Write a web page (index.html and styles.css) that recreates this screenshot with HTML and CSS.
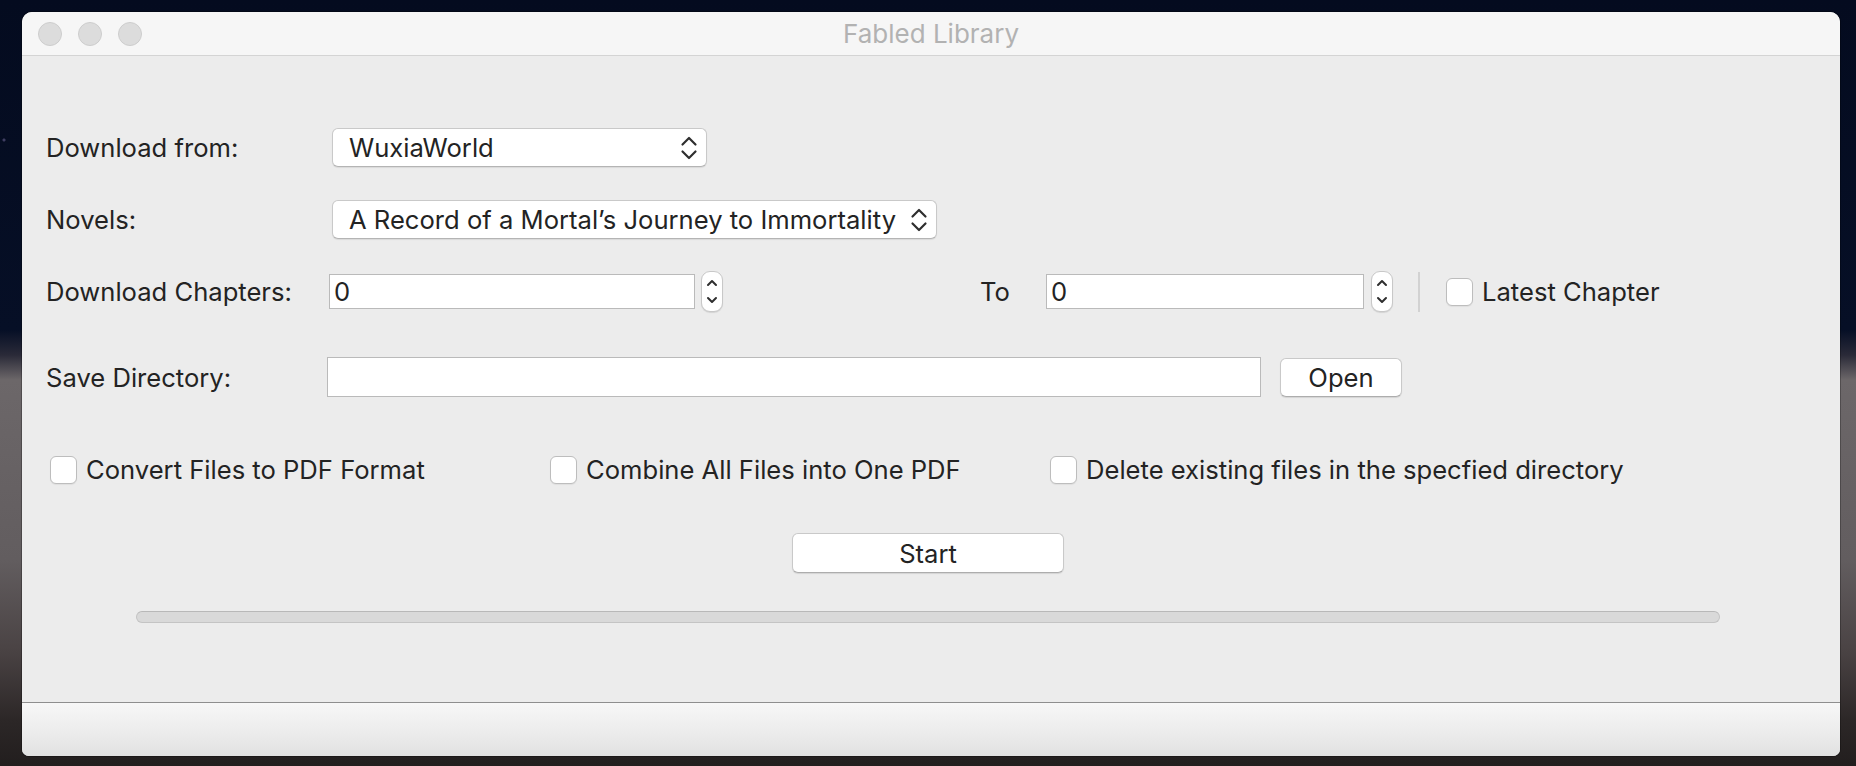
FILE: index.html
```html
<!DOCTYPE html>
<html>
<head>
<meta charset="utf-8">
<title>Fabled Library</title>
<link rel="stylesheet" href="styles.css">
</head>
<body>
<div class="window">
  <div class="titlebar">
    <div class="lights">
      <span class="light"></span>
      <span class="light"></span>
      <span class="light"></span>
    </div>
    <div class="title">Fabled Library</div>
    <div></div>
  </div>

  <div class="content">
    <div class="row row-source">
      <span class="lbl">Download from:</span>
      <div class="combo combo-source">
        <span class="combo-text">WuxiaWorld</span>
        <svg class="combo-arrows" width="18" height="26" viewBox="0 0 18 26"><path d="M2.5 9.5 L9 3 L15.5 9.5 M2.5 16.5 L9 23 L15.5 16.5" fill="none" stroke="#2e2e2e" stroke-width="2.2" stroke-linecap="round" stroke-linejoin="round"/></svg>
      </div>
    </div>

    <div class="row row-novels">
      <span class="lbl">Novels:</span>
      <div class="combo combo-novel">
        <span class="combo-text">A Record of a Mortal’s Journey to Immortality</span>
        <svg class="combo-arrows" width="18" height="26" viewBox="0 0 18 26"><path d="M2.5 9.5 L9 3 L15.5 9.5 M2.5 16.5 L9 23 L15.5 16.5" fill="none" stroke="#2e2e2e" stroke-width="2.2" stroke-linecap="round" stroke-linejoin="round"/></svg>
      </div>
    </div>

    <div class="row row-chapters">
      <span class="lbl">Download Chapters:</span>
      <div class="field field-from">0</div>
      <div class="spinner">
        <svg width="22" height="41" viewBox="0 0 22 41"><path d="M7 14 L11 10 L15 14 M7 27 L11 31 L15 27" fill="none" stroke="#2e2e2e" stroke-width="2" stroke-linecap="round" stroke-linejoin="round"/></svg>
      </div>
      <span class="to-lbl">To</span>
      <div class="field field-to">0</div>
      <div class="spinner spinner-to">
        <svg width="22" height="41" viewBox="0 0 22 41"><path d="M7 14 L11 10 L15 14 M7 27 L11 31 L15 27" fill="none" stroke="#2e2e2e" stroke-width="2" stroke-linecap="round" stroke-linejoin="round"/></svg>
      </div>
      <span class="vsep"></span>
      <label class="check check-latest"><span class="box"></span><span class="check-text">Latest Chapter</span></label>
    </div>

    <div class="row row-save">
      <span class="lbl">Save Directory:</span>
      <div class="field field-dir"></div>
      <div class="btn btn-open">Open</div>
    </div>

    <div class="row row-options">
      <label class="check"><span class="box"></span><span class="check-text">Convert Files to PDF Format</span></label>
      <label class="check"><span class="box"></span><span class="check-text">Combine All Files into One PDF</span></label>
      <label class="check"><span class="box"></span><span class="check-text">Delete existing files in the specfied directory</span></label>
    </div>

    <div class="row row-start">
      <div class="btn btn-start">Start</div>
    </div>

    <div class="progress"></div>
  </div>

  <div class="statusbar"></div>
</div>
</body>
</html>
```

FILE: styles.css
```css
html, body {
  margin: 0;
  padding: 0;
}

body {
  width: 1856px;
  height: 766px;
  overflow: hidden;
  box-sizing: border-box;
  padding: 12px 16px 0 22px;
  font-family: Inter, "Liberation Sans", sans-serif;
  font-size: 25.6px;
  color: #232323;
  background:
    radial-gradient(circle at 4px 140px, rgba(120,110,160,0.5) 0 1px, transparent 2px),
    linear-gradient(180deg, #040b1f 0px, #060f26 330px, #2a2a38 355px, #6c6769 380px, #625d5f 560px, #4a4344 650px, #2c2727 720px, #221e1e 766px);
}

.window {
  width: 1818px;
  height: 744px;
  display: flex;
  flex-direction: column;
  border-radius: 10px 10px 7px 7px;
  overflow: hidden;
  background: #ececec;
  box-shadow: 0 0 0 1px rgba(0,0,0,0.25);
}

/* title bar */
.titlebar {
  height: 43px;
  flex: none;
  display: grid;
  grid-template-columns: 1fr auto 1fr;
  align-items: center;
  background: #f6f6f6;
  border-bottom: 1px solid #d4d4d4;
}

.lights {
  display: flex;
  gap: 16px;
  padding-left: 16px;
}

.light {
  width: 22px;
  height: 22px;
  border-radius: 50%;
  background: #dcdcdc;
  border: 1px solid #cdcdcd;
}

.title {
  font-size: 26px;
  color: #b2b2b2;
  padding-bottom: 1px;
}

/* content */
.content {
  flex: 1;
  display: flex;
  flex-direction: column;
  padding: 72px 0 0 24px;
}

.row {
  display: flex;
  align-items: center;
}

.row-source { height: 39px; }
.row-novels { height: 39px; margin-top: 33px; }
.row-chapters { height: 41px; margin-top: 32px; }
.row-save { height: 40px; margin-top: 45px; }
.row-options { height: 28px; margin-top: 57px; }
.row-start { height: 40px; margin-top: 51px; justify-content: center; padding-right: 30px; }

.lbl {
  width: 283px;
  flex: none;
  white-space: nowrap;
}

/* combo boxes */
.combo {
  box-sizing: border-box;
  height: 39px;
  margin-left: 3px;
  display: flex;
  align-items: center;
  justify-content: space-between;
  padding: 0 8px 0 16px;
  background: #fff;
  border: 1px solid #c9c9c9;
  border-bottom-color: #b4b4b4;
  border-radius: 6px;
  box-shadow: 0 1px 1px rgba(0,0,0,0.08);
}

.combo-source { width: 375px; }
.combo-novel { width: 605px; }

.combo-text {
  white-space: nowrap;
}

.combo-arrows {
  flex: none;
}

/* fields */
.field {
  box-sizing: border-box;
  height: 35px;
  background: #fff;
  border: 1px solid #bababa;
  padding: 0 4px;
  display: flex;
  align-items: center;
}

.field-from { width: 366px; }
.field-to { width: 318px; }
.field-dir { width: 934px; height: 40px; margin-left: -2px; }

.spinner {
  box-sizing: border-box;
  width: 22px;
  height: 41px;
  margin-left: 6px;
  background: #fff;
  border: 1px solid #c8c8c8;
  border-radius: 9px;
  box-shadow: 0 1px 1px rgba(0,0,0,0.1);
  display: flex;
}

.spinner svg {
  margin: -1px;
}

.spinner-to { margin-left: 7px; }

.to-lbl {
  width: 66px;
  margin-left: 257px;
  flex: none;
}

.vsep {
  width: 2px;
  height: 40px;
  margin-left: 25px;
  background: #d2d2d2;
}

/* checkboxes */
.check {
  display: flex;
  align-items: center;
  white-space: nowrap;
}

.box {
  box-sizing: border-box;
  width: 27px;
  height: 28px;
  flex: none;
  background: #fff;
  border: 1px solid #bdbdbd;
  border-radius: 6px;
  box-shadow: 0 1px 1px rgba(0,0,0,0.06);
}

.check-text {
  margin-left: 9px;
}

.check-latest {
  margin-left: 26px;
}

.row-options {
  display: grid;
  grid-template-columns: 500px 500px 500px;
  padding-left: 4px;
}

/* buttons */
.btn {
  box-sizing: border-box;
  height: 39px;
  display: flex;
  align-items: center;
  justify-content: center;
  background: #fff;
  border: 1px solid #c9c9c9;
  border-bottom-color: #adadad;
  border-radius: 6px;
  box-shadow: 0 1px 1px rgba(0,0,0,0.1);
}

.btn-open {
  width: 122px;
  margin-left: 19px;
}

.btn-start {
  width: 272px;
  height: 40px;
}

/* progress bar */
.progress {
  box-sizing: border-box;
  height: 12px;
  margin: 38px 120px 0 90px;
  border-radius: 6px;
  background: #d9d9d9;
  border: 1px solid #c4c4c4;
  border-top-color: #b8b8b8;
}

/* bottom bar */
.statusbar {
  height: 53px;
  flex: none;
  border-top: 1px solid #8e8e8e;
  background: linear-gradient(180deg, #f7f7f7 0%, #ececec 55%, #e1e1e1 100%);
}
```
